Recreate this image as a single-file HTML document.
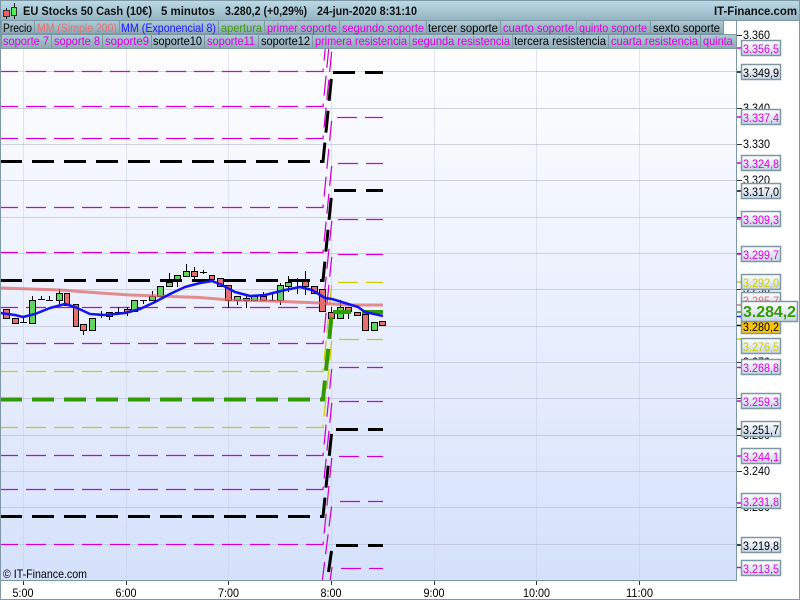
<!DOCTYPE html>
<html><head><meta charset="utf-8"><title>EU Stocks 50 Cash</title>
<style>
html,body{margin:0;padding:0;background:#fff;width:800px;height:600px;overflow:hidden}
svg{display:block;font-family:"Liberation Sans",sans-serif;font-size:11px}
.m{stroke:#d000d0;stroke-width:1.25;fill:none;stroke-dasharray:20 8;stroke-dashoffset:2}
.y{stroke:#cccc00;stroke-width:1.25;fill:none;stroke-dasharray:20 8;stroke-dashoffset:2}
.b{stroke:#000;stroke-width:3;fill:none;stroke-dasharray:22 10}
.g{stroke:#339900;stroke-width:4;fill:none;stroke-dasharray:22 10}
.rm{stroke:#d000d0;stroke-width:1.25;stroke-dasharray:20 8}
.ry{stroke:#cccc00;stroke-width:1.25;stroke-dasharray:20 8}
.rb{stroke:#000;stroke-width:3;stroke-dasharray:22 10}
.tab{fill:url(#tabg);stroke:#7d97a5;stroke-width:1}
.box{fill:url(#boxg);stroke:#7d97a5;stroke-width:1.5}
.k{fill:#000}.p{fill:#dd00dd}
</style></head><body>
<svg width="800" height="600" viewBox="0 0 800 600" xmlns="http://www.w3.org/2000/svg">
<defs>
<linearGradient id="bg" x1="0" y1="0" x2="0" y2="1"><stop offset="0" stop-color="#feFEff"/><stop offset="1" stop-color="#d5e1fb"/></linearGradient>
<linearGradient id="head" x1="0" y1="0" x2="0" y2="1"><stop offset="0" stop-color="#bcdbe7"/><stop offset="1" stop-color="#93b3c1"/></linearGradient>
<linearGradient id="tabg" x1="0" y1="0" x2="0" y2="1"><stop offset="0" stop-color="#adcbd7"/><stop offset="1" stop-color="#8ea8b4"/></linearGradient>
<linearGradient id="boxg" x1="0" y1="0" x2="0" y2="1"><stop offset="0" stop-color="#ffffff"/><stop offset="1" stop-color="#c6d4e6"/></linearGradient>
<clipPath id="plot"><rect x="1" y="48" width="735" height="532"/></clipPath>
<clipPath id="tabs"><rect x="0" y="20" width="736" height="29"/></clipPath>
</defs>
<rect width="800" height="600" fill="#fff"/>
<rect x="1" y="48" width="735" height="532" fill="url(#bg)"/>

<g clip-path="url(#plot)">
<path d="M23.5 48V580M126.5 48V580M228.5 48V580M331.5 48V580M434.5 48V580M536.5 48V580M639.5 48V580" stroke="#c9cfe6" stroke-opacity=".55" fill="none"/>
<path d="M1 71.5H736M1 108.5H736M1 144.5H736M1 180.5H736M1 217.5H736M1 253.5H736M1 289.5H736M1 326.5H736M1 362.5H736M1 398.5H736M1 435.5H736M1 471.5H736M1 507.5H736M1 544.5H736" stroke="#b4b8d2" stroke-opacity=".6" fill="none"/>

<polyline class="m" points="0,71.5 323,71.5 325.3,48"/>
<polyline class="m" points="0,106.5 323,106.5 328.8,48"/>
<polyline class="m" points="0,138.5 323,138.5 332,48"/>
<polyline class="m" points="0,207.5 323,207.5 332,117"/>
<polyline class="m" points="0,252.5 323,252.5 332,163"/>
<polyline class="m" points="0,307.5 323,307.5 332,219"/>
<polyline class="m" points="0,343.5 323,343.5 332,254"/>
<polyline class="y" points="0,371.5 323,371.5 332,282"/>
<polyline class="y" points="0,427.5 323,427.5 332,338"/>
<polyline class="m" points="0,455.5 323,455.5 332,366"/>
<polyline class="m" points="0,489.5 323,489.5 332,401"/>
<polyline class="m" points="0,544.5 323,544.5 332,456"/>
<line class="m" x1="322.4" y1="580" x2="332" y2="503"/>
<line class="m" x1="330.2" y1="580" x2="332" y2="567"/>
<polyline class="b" points="0,161.5 323,161.5 332,72"/>
<polyline class="b" points="0,280.5 323,280.5 332,190"/>
<polyline class="b" points="0,516.5 323,516.5 332,429"/>
<line x1="331.5" y1="551" x2="328.5" y2="572" stroke="#000" stroke-width="3"/>

<line class="rb" x1="333" y1="72.5" x2="383" y2="72.5"/>
<line class="rm" x1="337" y1="117.5" x2="383" y2="117.5"/>
<line class="rm" x1="338" y1="163.5" x2="383" y2="163.5"/>
<line class="rb" x1="334" y1="190.5" x2="383" y2="190.5"/>
<line class="rm" x1="338" y1="219.5" x2="383" y2="219.5"/>
<line class="rm" x1="338" y1="254.5" x2="383" y2="254.5"/>
<line class="ry" x1="338" y1="282.5" x2="383" y2="282.5"/>
<line class="ry" x1="339" y1="339.5" x2="383" y2="339.5"/>
<line class="rm" x1="339" y1="367.5" x2="383" y2="367.5"/>
<line class="rm" x1="339" y1="401.5" x2="383" y2="401.5"/>
<line class="rb" x1="336" y1="429.5" x2="383" y2="429.5"/>
<line class="rm" x1="339" y1="456.5" x2="383" y2="456.5"/>
<line class="rm" x1="340" y1="501.5" x2="383" y2="501.5"/>
<line class="rb" x1="336" y1="545.5" x2="383" y2="545.5"/>
<line class="rm" x1="341" y1="568.5" x2="383" y2="568.5"/>

<!-- wicks and flat candles -->
<path fill="none" stroke="#000" stroke-width="1" d="M23.5 318V322M20 322.5H27M32.5 296V300M41.5 296V299M38 299.5H45M49.5 296V300M46 300.5H53M59.5 289V305M83.5 330V335M101.5 311V318M98 315.5H105M109.5 316V320M118.5 307V315M115 312.5H122M127.5 307V316M143.5 300V304M140 300.5H147M152.5 291V296M169.5 273V282M177.5 279V287M186.5 264V271M194.5 267V282M203.5 270V274M200 272.5H207M228.5 300V308M237.5 300V305M246.5 296V308M263.5 292V296M272.5 293V300M269 300.5H276M280.5 283V305M288.5 276V292M297.5 278V294M294 280.5H301M305.5 271V295M331.5 307V326M340.5 300V307M348.5 311V319"/>
<!-- red bodies -->
<path fill="#e76f6f" stroke="#000" stroke-width="1" d="M3.5 309.5h6v9h-6zM12.5 318.5h6v5h-6zM64.5 293.5h5v12h-5zM73.5 304.5h5v22h-5zM80.5 324.5h6v6h-6zM124.5 309.5h6v3h-6zM191.5 271.5h6v5h-6zM209.5 275.5h5v4h-5zM217.5 278.5h6v8h-6zM225.5 285.5h6v15h-6zM243.5 298.5h6v2h-6zM260.5 296.5h6v4h-6zM302.5 281.5h6v5h-6zM311.5 286.5h6v7h-6zM319.5 289.5h6v22h-6zM328.5 312.5h6v6h-6zM345.5 307.5h6v4h-6zM354.5 312.5h6v3h-6zM362.5 314.5h6v16h-6zM379.5 321.5h6v4h-6z"/>
<!-- green bodies -->
<path fill="#5fd75f" stroke="#000" stroke-width="1" d="M29.5 300.5h6v23h-6zM56.5 293.5h6v7h-6zM89.5 318.5h6v12h-6zM106.5 312.5h6v4h-6zM131.5 300.5h6v11h-6zM149.5 296.5h6v4h-6zM157.5 286.5h6v10h-6zM166.5 282.5h6v4h-6zM174.5 275.5h6v4h-6zM183.5 271.5h6v5h-6zM234.5 296.5h6v4h-6zM251.5 296.5h6v4h-6zM277.5 285.5h6v15h-6zM285.5 282.5h6v4h-6zM337.5 307.5h6v11h-6zM371.5 322.5h6v8h-6z"/>

<polyline class="g" points="0,399.5 323,399.5 332,312"/>
<line x1="333" y1="312" x2="351" y2="312" stroke="#339900" stroke-width="4"/>
<line x1="362" y1="312" x2="383" y2="312" stroke="#339900" stroke-width="4"/>
<polyline fill="none" stroke="#e06a6a" stroke-opacity=".75" stroke-width="3" points="0,288 60,290 100,293 130,295 200,297.5 230,300 270,301 320,303 345,305 383,305"/>
<polyline fill="none" stroke="#1414ee" stroke-width="2.5" stroke-linejoin="round" points="0,313 15,315 23,317 35,314 50,308 65,304 75,307 90,314 105,315 125,313 140,309 155,302 170,294 185,287 200,283 212,281 222,285 235,292 250,296 265,295 285,290 300,287 312,290 325,298 332,299 345,303 358,307 365,312 383,316"/>
<text x="3" y="578" class="k" font-size="12" textLength="84" lengthAdjust="spacingAndGlyphs">© IT-Finance.com</text>
</g>

<!-- header -->
<rect x="0.5" y="0.5" width="799" height="20" fill="url(#head)" stroke="#7d97a5"/>
<g font-weight="bold" font-size="12" fill="#111">
<text x="23" y="15" textLength="129" lengthAdjust="spacingAndGlyphs">EU Stocks 50 Cash (10€)</text>
<text x="161" y="15" textLength="54" lengthAdjust="spacingAndGlyphs">5 minutos</text>
<text x="225" y="15" textLength="82" lengthAdjust="spacingAndGlyphs">3.280,2 (+0,29%)</text>
<text x="317" y="15" textLength="100" lengthAdjust="spacingAndGlyphs">24-jun-2020 8:31:10</text>
<text x="714" y="15" textLength="83" lengthAdjust="spacingAndGlyphs">IT-Finance.com</text>
</g>
<path d="M6.5 8V19" stroke="#222"/><rect x="3.5" y="10.5" width="6" height="6" fill="#f06060" stroke="#333"/>
<path d="M14.5 3V19" stroke="#222"/><rect x="11.5" y="7.5" width="5" height="8" fill="#55ee55" stroke="#333"/>

<!-- legend tabs -->
<g clip-path="url(#tabs)" font-size="12">
<rect class="tab" x="1.5" y="20.5" width="33" height="13"/>
<rect class="tab" x="34.5" y="20.5" width="85" height="13"/>
<rect class="tab" x="119.5" y="20.5" width="99" height="13"/>
<rect class="tab" x="218.5" y="20.5" width="46" height="13"/>
<rect class="tab" x="264.5" y="20.5" width="75" height="13"/>
<rect class="tab" x="339.5" y="20.5" width="87" height="13"/>
<rect class="tab" x="426.5" y="20.5" width="74" height="13"/>
<rect class="tab" x="500.5" y="20.5" width="76" height="13"/>
<rect class="tab" x="576.5" y="20.5" width="74" height="13"/>
<rect class="tab" x="650.5" y="20.5" width="73" height="13"/>
<rect class="tab" x="1.5" y="34.5" width="50" height="14"/>
<rect class="tab" x="51.5" y="34.5" width="51" height="14"/>
<rect class="tab" x="102.5" y="34.5" width="49" height="14"/>
<rect class="tab" x="151.5" y="34.5" width="53" height="14"/>
<rect class="tab" x="204.5" y="34.5" width="54" height="14"/>
<rect class="tab" x="258.5" y="34.5" width="54" height="14"/>
<rect class="tab" x="312.5" y="34.5" width="97" height="14"/>
<rect class="tab" x="409.5" y="34.5" width="103" height="14"/>
<rect class="tab" x="512.5" y="34.5" width="96" height="14"/>
<rect class="tab" x="608.5" y="34.5" width="92" height="14"/>
<rect class="tab" x="700.5" y="34.5" width="60" height="14"/>
<text x="3" y="32" class="k" textLength="29" lengthAdjust="spacingAndGlyphs">Precio</text>
<text x="37" y="32" fill="#e57070" textLength="80" lengthAdjust="spacingAndGlyphs">MM (Simple 200)</text>
<text x="121" y="32" fill="#1a1aff" textLength="95" lengthAdjust="spacingAndGlyphs">MM (Exponencial 8)</text>
<text x="221" y="32" fill="#3c9a0a" textLength="41" lengthAdjust="spacingAndGlyphs">apertura</text>
<text x="267" y="32" class="p" textLength="70" lengthAdjust="spacingAndGlyphs">primer soporte</text>
<text x="342" y="32" class="p" textLength="82" lengthAdjust="spacingAndGlyphs">segundo soporte</text>
<text x="428" y="32" class="k" textLength="70" lengthAdjust="spacingAndGlyphs">tercer soporte</text>
<text x="503" y="32" class="p" textLength="71" lengthAdjust="spacingAndGlyphs">cuarto soporte</text>
<text x="579" y="32" class="p" textLength="68" lengthAdjust="spacingAndGlyphs">quinto soporte</text>
<text x="653" y="32" class="k" textLength="67" lengthAdjust="spacingAndGlyphs">sexto soporte</text>
<text x="3" y="45" class="p" textLength="46" lengthAdjust="spacingAndGlyphs">soporte 7</text>
<text x="54" y="45" class="p" textLength="46" lengthAdjust="spacingAndGlyphs">soporte 8</text>
<text x="105" y="45" class="p" textLength="44" lengthAdjust="spacingAndGlyphs">soporte9</text>
<text x="153" y="45" class="k" textLength="49" lengthAdjust="spacingAndGlyphs">soporte10</text>
<text x="207" y="45" class="p" textLength="48" lengthAdjust="spacingAndGlyphs">soporte11</text>
<text x="261" y="45" class="k" textLength="49" lengthAdjust="spacingAndGlyphs">soporte12</text>
<text x="315" y="45" class="p" textLength="92" lengthAdjust="spacingAndGlyphs">primera resistencia</text>
<text x="412" y="45" class="p" textLength="98" lengthAdjust="spacingAndGlyphs">segunda resistencia</text>
<text x="514" y="45" class="k" textLength="92" lengthAdjust="spacingAndGlyphs">tercera resistencia</text>
<text x="611" y="45" class="p" textLength="87" lengthAdjust="spacingAndGlyphs">cuarta resistencia</text>
<text x="703" y="45" class="p" textLength="85" lengthAdjust="spacingAndGlyphs">quinta resistencia</text>
</g>

<!-- axes -->
<path d="M736.5 20V580.5H0.5" fill="none" stroke="#7d97a5"/>
<path d="M0.5 20V599.5H799.5V0" fill="none" stroke="#7d97a5"/>
<path d="M23.5 581V585M126.5 581V585M228.5 581V585M331.5 581V585M434.5 581V585M536.5 581V585M639.5 581V585" stroke="#333"/>
<g class="k" font-size="12">
<text x="12.5" y="597" textLength="21" lengthAdjust="spacingAndGlyphs">5:00</text><text x="115.5" y="597" textLength="21" lengthAdjust="spacingAndGlyphs">6:00</text><text x="218" y="597" textLength="21" lengthAdjust="spacingAndGlyphs">7:00</text><text x="320.5" y="597" textLength="21" lengthAdjust="spacingAndGlyphs">8:00</text><text x="423.5" y="597" textLength="21" lengthAdjust="spacingAndGlyphs">9:00</text><text x="523" y="597" textLength="27" lengthAdjust="spacingAndGlyphs">10:00</text><text x="626" y="597" textLength="27" lengthAdjust="spacingAndGlyphs">11:00</text>
</g>
<path d="M737 35.5h5M737 108.5h5M737 144.5h5M737 180.5h5M737 217.5h5M737 253.5h5M737 289.5h5M737 362.5h5M737 398.5h5M737 435.5h5M737 471.5h5M737 507.5h5" stroke="#333"/>
<g class="k" font-size="12">
<text x="743" y="39" textLength="27" lengthAdjust="spacingAndGlyphs">3.360</text><text x="743" y="112" textLength="27" lengthAdjust="spacingAndGlyphs">3.340</text><text x="743" y="148" textLength="27" lengthAdjust="spacingAndGlyphs">3.330</text><text x="743" y="184" textLength="27" lengthAdjust="spacingAndGlyphs">3.320</text><text x="743" y="293" textLength="27" lengthAdjust="spacingAndGlyphs">3.290</text><text x="743" y="366" textLength="27" lengthAdjust="spacingAndGlyphs">3.270</text><text x="743" y="439" textLength="27" lengthAdjust="spacingAndGlyphs">3.250</text><text x="743" y="475" textLength="27" lengthAdjust="spacingAndGlyphs">3.240</text><text x="743" y="511" textLength="27" lengthAdjust="spacingAndGlyphs">3.230</text>
</g>
<!-- level ticks -->
<g stroke-width="1.5">
<path d="M737 48h5M737 117h5M737 163h5M737 219h5M737 254h5M737 367.5h5M737 401h5M737 456h5M737 503h5M737 567.5h5" stroke="#cc00cc"/>
<path d="M737 72h5M737 191h5M737 325.5h5M737 429h5M737 545h5" stroke="#000"/>
<path d="M737 282h5M737 339h5" stroke="#cccc00"/>
<path d="M737 305h5" stroke="#e57070"/><path d="M737 312h5" stroke="#339900"/><path d="M737 316.5h5" stroke="#1414ee"/>
</g>
<!-- label boxes -->
<g font-size="12">
<rect class="box" x="741.5" y="40.5" width="39" height="15"/><text x="743" y="53" class="p" textLength="36" lengthAdjust="spacingAndGlyphs">3.356,5</text>
<rect class="box" x="741.5" y="64.5" width="39" height="15"/><text x="743" y="77" class="k" textLength="36" lengthAdjust="spacingAndGlyphs">3.349,9</text>
<rect class="box" x="741.5" y="109.5" width="39" height="15"/><text x="743" y="122" class="p" textLength="36" lengthAdjust="spacingAndGlyphs">3.337,4</text>
<rect class="box" x="741.5" y="155.5" width="39" height="15"/><text x="743" y="168" class="p" textLength="36" lengthAdjust="spacingAndGlyphs">3.324,8</text>
<rect class="box" x="741.5" y="183.5" width="39" height="15"/><text x="743" y="196" class="k" textLength="36" lengthAdjust="spacingAndGlyphs">3.317,0</text>
<rect class="box" x="741.5" y="211.5" width="39" height="15"/><text x="743" y="224" class="p" textLength="36" lengthAdjust="spacingAndGlyphs">3.309,3</text>
<rect class="box" x="741.5" y="246.5" width="39" height="15"/><text x="743" y="259" class="p" textLength="36" lengthAdjust="spacingAndGlyphs">3.299,7</text>
<rect class="box" x="741.5" y="274.5" width="39" height="15"/><text x="743" y="287" fill="#cccc00" textLength="36" lengthAdjust="spacingAndGlyphs">3.292,0</text>
<rect class="box" x="741.5" y="292.5" width="39" height="15"/><text x="743" y="305" fill="#e57070" textLength="36" lengthAdjust="spacingAndGlyphs">3.285,7</text>
<rect x="741.5" y="318.5" width="39" height="15" fill="#fcc40a" stroke="#7d97a5" stroke-width="1.5"/><text x="743" y="331" class="k" textLength="36" lengthAdjust="spacingAndGlyphs">3.280,2</text>
<rect class="box" x="741.5" y="301.5" width="56" height="20"/><text x="743" y="317" fill="#339900" font-size="16" font-weight="bold" textLength="53" lengthAdjust="spacingAndGlyphs">3.284,2</text>
<rect class="box" x="741.5" y="338.5" width="39" height="15"/><text x="743" y="351" fill="#cccc00" textLength="36" lengthAdjust="spacingAndGlyphs">3.276,5</text>
<rect class="box" x="741.5" y="359.5" width="39" height="15"/><text x="743" y="372" class="p" textLength="36" lengthAdjust="spacingAndGlyphs">3.268,8</text>
<rect class="box" x="741.5" y="393.5" width="39" height="15"/><text x="743" y="406" class="p" textLength="36" lengthAdjust="spacingAndGlyphs">3.259,3</text>
<rect class="box" x="741.5" y="421.5" width="39" height="15"/><text x="743" y="434" class="k" textLength="36" lengthAdjust="spacingAndGlyphs">3.251,7</text>
<rect class="box" x="741.5" y="448.5" width="39" height="15"/><text x="743" y="461" class="p" textLength="36" lengthAdjust="spacingAndGlyphs">3.244,1</text>
<rect class="box" x="741.5" y="493.5" width="39" height="15"/><text x="743" y="506" class="p" textLength="36" lengthAdjust="spacingAndGlyphs">3.231,8</text>
<rect class="box" x="741.5" y="537.5" width="39" height="15"/><text x="743" y="550" class="k" textLength="36" lengthAdjust="spacingAndGlyphs">3.219,8</text>
<rect class="box" x="741.5" y="560.5" width="39" height="15"/><text x="743" y="573" class="p" textLength="36" lengthAdjust="spacingAndGlyphs">3.213,5</text>
</g>
</svg>
</body></html>
